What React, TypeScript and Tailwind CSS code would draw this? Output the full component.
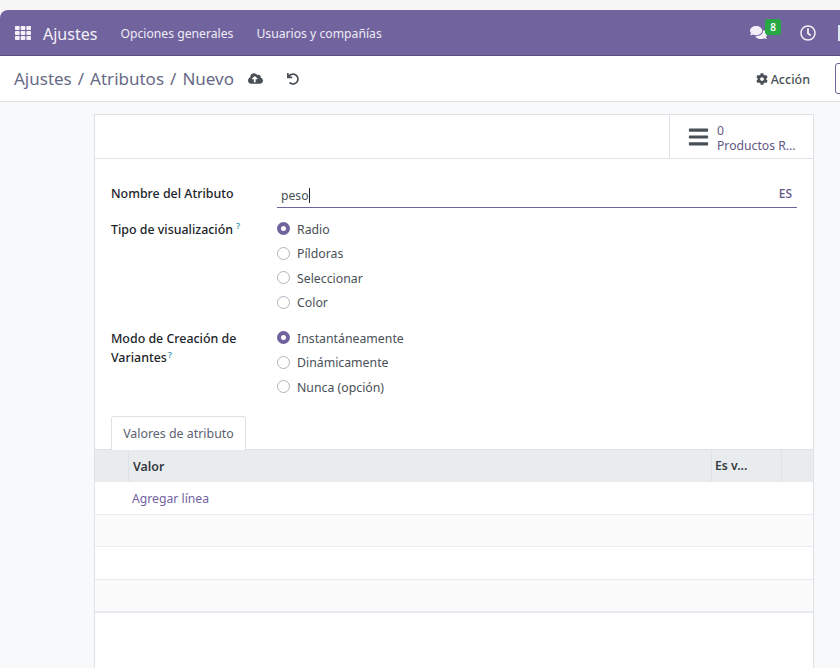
import { FaBars, FaCloudUploadAlt, FaCog, FaComments, FaRegClock, FaTh, FaUndo } from "react-icons/fa";

function RadioRow({ label, checked }: { label: string; checked?: boolean }) {
  return (
    <div className="flex h-[24.4px] items-center gap-[7px]">
      {checked ? (
        <span className="h-[13px] w-[13px] rounded-full border-[4px] border-[#71639e] bg-white" />
      ) : (
        <span className="h-[13px] w-[13px] rounded-full border border-[#adb5bd] bg-white" />
      )}
      <span className="pt-[2px] text-[12.3px] leading-[18px] text-[#495057]">{label}</span>
    </div>
  );
}

export default function App() {
  return (
    <div className="h-[668px] w-[840px] overflow-hidden bg-[#f8f9fa] font-['Noto_Sans',sans-serif] text-[12.4px] text-[#212529]">
      {/* top strip */}
      <div className="h-[10px] bg-[#f6f6f6]" />

      {/* navbar */}
      <div className="flex h-[46px] items-center rounded-tl-[8px] border-b border-[#5a4f7f] bg-[#71639e] pl-[15px] text-white">
        <FaTh className="h-[16px] w-[16px] text-[#f3f1f7]" />
        <span className="ml-[12px] mt-[2px] text-[16px] text-[#f3f1f7]">Ajustes</span>
        <span className="ml-[23px] mt-[4px] text-[12.2px] text-[#eeecf4]">Opciones generales</span>
        <span className="ml-[23px] mt-[4px] text-[12.2px] text-[#eeecf4]">Usuarios y compañías</span>
        <div className="ml-auto flex items-center">
          <div className="relative">
            <FaComments className="h-[17px] w-[17px] text-[#f3f1f7]" />
            <span className="absolute -top-[5px] left-[15px] flex h-[16px] w-[16px] items-center justify-center rounded-[3px] bg-[#28a745] text-[10px] font-semibold">
              8
            </span>
          </div>
          <FaRegClock className="ml-[33px] h-[16px] w-[16px] text-[#f3f1f7]" />
          <div className="ml-[22px] -mr-[8px] h-[16px] w-[10px] shrink-0 bg-[#dbe7f3]" />
        </div>
      </div>

      {/* control panel */}
      <div className="flex h-[46px] items-center border-b border-[#dee2e6] bg-white pl-[14px]">
        <div className="flex items-center text-[17px] text-[#666a86]">
          <span>Ajustes</span>
          <span className="mx-[6px]">/</span>
          <span>Atributos</span>
          <span className="mx-[6px]">/</span>
          <span>Nuevo</span>
        </div>
        <FaCloudUploadAlt className="ml-[14px] h-[15px] w-[15px] text-[#495057]" />
        <FaUndo className="ml-[24px] h-[12px] w-[12px] text-[#495057]" />
        <div className="ml-auto flex items-center">
          <FaCog className="h-[12px] w-[12px] text-[#495057]" />
          <span className="ml-[3px] mt-[4px] text-[12.5px] font-medium text-[#495057]">Acción</span>
          <div className="ml-[25px] -mr-[15px] h-[31px] w-[20px] shrink-0 rounded-[3px] border border-[#71639e] bg-white" />
        </div>
      </div>

      {/* form sheet */}
      <div className="ml-[94px] mt-[12px] h-[560px] w-[720px] border border-[#dee2e6] bg-white">
        <div className="flex h-[44px] justify-end border-b border-[#dee2e6]">
          <div className="flex w-[144px] items-center border-l border-[#dee2e6] pl-[18px]">
            <FaBars className="h-[22px] w-[21px] text-[#495057]" />
            <div className="ml-[8px] mt-[3px] text-[12.2px] leading-[15px] text-[#5f5685]">
              <div>0</div>
              <div className="whitespace-nowrap">Productos R...</div>
            </div>
          </div>
        </div>

        <div className="px-[16px] pt-[21px]">
          <div className="flex h-[28px]">
            <div className="w-[166px] text-[12.4px] font-medium leading-[28px]">Nombre del Atributo</div>
            <div className="flex h-[28px] flex-1 items-center border-b border-[#71639e] pl-[4px] pr-[5px]">
              <span className="mt-[6px] text-[12.2px] text-[#495057]">peso</span>
              <span className="mt-[4px] h-[15px] w-px bg-[#212529]" />
              <span className="ml-auto text-[12px] font-medium text-[#5f5685]">ES</span>
            </div>
          </div>

          <div className="mt-[8.7px] flex">
            <div className="w-[166px] pt-[4px] text-[12.4px] font-medium leading-[18px]">
              Tipo de visualización
              <sup className="ml-[3px] text-[9px] font-semibold text-[#3a9ab5]">?</sup>
            </div>
            <div>
              <RadioRow label="Radio" checked />
              <RadioRow label="Píldoras" />
              <RadioRow label="Seleccionar" />
              <RadioRow label="Color" />
            </div>
          </div>

          <div className="mt-[11.5px] flex">
            <div className="w-[166px] pt-[3.5px] text-[12.4px] font-medium leading-[19px]">
              Modo de Creación de
              <br />
              Variantes
              <sup className="ml-[1px] text-[9px] font-semibold text-[#3a9ab5]">?</sup>
            </div>
            <div>
              <RadioRow label="Instantáneamente" checked />
              <RadioRow label="Dinámicamente" />
              <RadioRow label="Nunca (opción)" />
            </div>
          </div>
        </div>

        {/* tabs */}
        <div className="mt-[17.3px] flex h-[34px] border-b border-[#dee2e6] pl-[16px]">
          <div className="-mb-px flex w-[135px] items-center justify-center rounded-t-[3px] border border-b-0 border-[#dee2e6] bg-white pt-[2px] text-[12.4px] text-[#5c6270]">
            Valores de atributo
          </div>
        </div>

        {/* table */}
        <div className="flex h-[32px] bg-[#e9ecef] text-[12.4px] font-semibold text-[#343a40]">
          <div className="w-[34px] border-r border-[#dee2e6]" />
          <div className="flex flex-1 items-center pl-[4px] pt-[2px]">Valor</div>
          <div className="flex w-[70px] items-center border-l border-[#dee2e6] pl-[3px] text-[12.2px]">Es v...</div>
          <div className="w-[32px] border-l border-[#dee2e6]" />
        </div>
        <div className="flex h-[33px] items-center border-b border-[#e9ecef] pl-[37px] pt-[2px] text-[12.2px] text-[#71639e]">
          Agregar línea
        </div>
        <div className="h-[32px] border-b border-[#e9ecef] bg-[#fbfbfb]" />
        <div className="h-[33px] border-b border-[#e9ecef] bg-white" />
        <div className="h-[33px] border-b-2 border-[#e6e9ed] bg-[#fbfbfb]" />
      </div>
    </div>
  );
}
